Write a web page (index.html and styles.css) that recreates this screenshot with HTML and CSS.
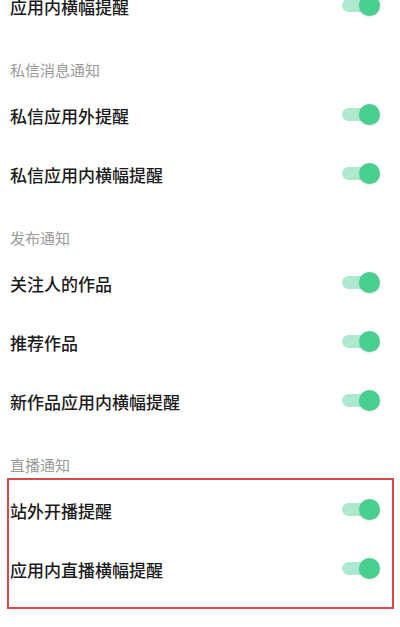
FILE: index.html
```html
<!DOCTYPE html>
<html lang="zh-CN">
<head>
<meta charset="utf-8">
<link rel="stylesheet" href="styles.css">
</head>
<body>
<div class="page">
  <div class="list">
    <div class="row"><span class="label">应用内横幅提醒</span><span class="toggle"></span></div>

    <div class="header">私信消息通知</div>
    <div class="row"><span class="label">私信应用外提醒</span><span class="toggle"></span></div>
    <div class="row"><span class="label">私信应用内横幅提醒</span><span class="toggle"></span></div>

    <div class="header">发布通知</div>
    <div class="row"><span class="label">关注人的作品</span><span class="toggle"></span></div>
    <div class="row"><span class="label">推荐作品</span><span class="toggle"></span></div>
    <div class="row"><span class="label">新作品应用内横幅提醒</span><span class="toggle"></span></div>

    <div class="header">直播通知</div>
    <div class="row"><span class="label">站外开播提醒</span><span class="toggle"></span></div>
    <div class="row"><span class="label">应用内直播横幅提醒</span><span class="toggle"></span></div>
  </div>
  <div class="highlight"></div>
</div>
</body>
</html>
```

FILE: styles.css
```css
html, body {
  margin: 0;
  padding: 0;
  background: #ffffff;
}

body {
  width: 400px;
  height: 627px;
  overflow: hidden;
  font-family: "Noto Sans CJK SC", "Noto Sans", sans-serif;
}

.page {
  position: relative;
  width: 400px;
  height: 627px;
  overflow: hidden;
}

.list {
  margin-top: -23px;
}

.row {
  height: 59px;
  display: flex;
  align-items: center;
  justify-content: space-between;
  padding: 0 20px 0 10px;
  box-sizing: border-box;
}

.label {
  font-size: 17px;
  line-height: 20px;
  font-weight: 500;
  color: #1a1a1a;
}

.header {
  height: 50px;
  box-sizing: border-box;
  padding: 25px 0 0 10px;
  font-size: 15px;
  line-height: 18px;
  color: #9a9a9a;
}

.toggle {
  position: relative;
  width: 38px;
  height: 20px;
  margin-bottom: 4px;
  flex: none;
}

.toggle::before {
  content: "";
  position: absolute;
  left: 0;
  top: 4px;
  width: 30px;
  height: 13px;
  border-radius: 7px;
  background: #ade9cf;
}

.toggle::after {
  content: "";
  position: absolute;
  right: 0;
  top: 0;
  width: 21px;
  height: 21px;
  border-radius: 50%;
  background: #48cf8e;
  box-shadow: 0 1px 2px rgba(0, 0, 0, 0.12);
}

.highlight {
  position: absolute;
  left: 7px;
  top: 478px;
  width: 387px;
  height: 131px;
  box-sizing: border-box;
  border: 2px solid #d94848;
  pointer-events: none;
}
```
